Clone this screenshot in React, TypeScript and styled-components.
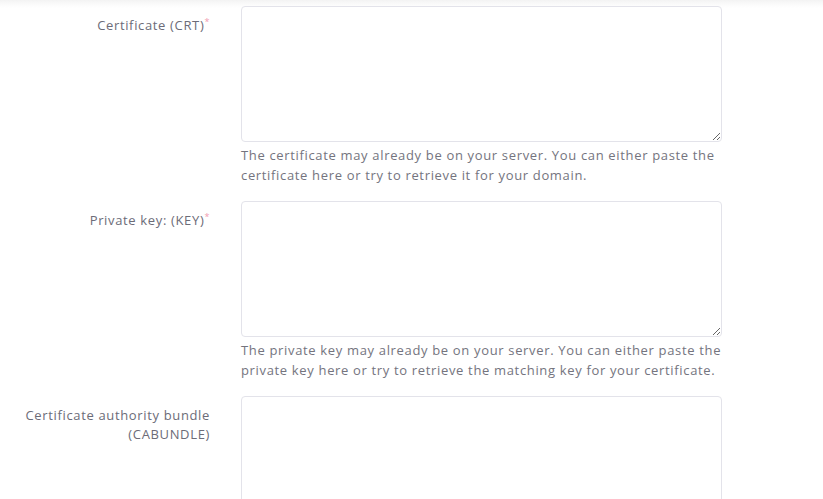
import React from 'react';
import styled, { createGlobalStyle } from 'styled-components';

const GlobalStyle = createGlobalStyle`
  html, body {
    margin: 0;
    padding: 0;
    background: #fff;
  }
  body {
    font-family: "Open Sans", "Liberation Sans", sans-serif;
  }
`;

const Page = styled.div`
  width: 823px;
  height: 499px;
  overflow: hidden;
  background: linear-gradient(to bottom, #f3f3f3 0px, #fafafa 4px, #fff 8px);
  padding-top: 6px;
  box-sizing: border-box;
`;

const Row = styled.div`
  display: grid;
  grid-template-columns: 210px 481px;
  column-gap: 31px;
  margin-bottom: 16px;
`;

const Label = styled.label`
  text-align: right;
  font-size: 13px;
  line-height: 19px;
  letter-spacing: 0.65px;
  color: #6c6c78;
  padding-top: 10px;
`;

const Required = styled.sup`
  color: #f19bb0;
  font-size: 9px;
  vertical-align: 5px;
  line-height: 0;
`;

const Field = styled.div`
  display: flex;
  flex-direction: column;
`;

const Area = styled.textarea`
  box-sizing: border-box;
  width: 481px;
  height: 136px;
  border: 1px solid #e3e3ea;
  border-radius: 4px;
  background: #fff;
  resize: vertical;
  outline: none;
  margin: 0;
  padding: 8px 10px;
`;

const Help = styled.p`
  margin: 3px -6px 0 0;
  font-size: 13px;
  line-height: 20px;
  letter-spacing: 0.66px;
  color: #74747e;
`;

type Item = { label: React.ReactNode; required?: boolean; help?: string };

const items: Item[] = [
  {
    label: 'Certificate (CRT)',
    required: true,
    help: 'The certificate may already be on your server. You can either paste the certificate here or try to retrieve it for your domain.',
  },
  {
    label: 'Private key: (KEY)',
    required: true,
    help: 'The private key may already be on your server. You can either paste the private key here or try to retrieve the matching key for your certificate.',
  },
  {
    label: (
      <>
        Certificate authority bundle
        <br />
        (CABUNDLE)
      </>
    ),
  },
];

export default function App() {
  return (
    <>
      <GlobalStyle />
      <Page>
        {items.map((item, i) => (
          <Row key={i}>
            <Label>
              {item.label}
              {item.required && <Required>*</Required>}
            </Label>
            <Field>
              <Area />
              {item.help && <Help>{item.help}</Help>}
            </Field>
          </Row>
        ))}
      </Page>
    </>
  );
}
